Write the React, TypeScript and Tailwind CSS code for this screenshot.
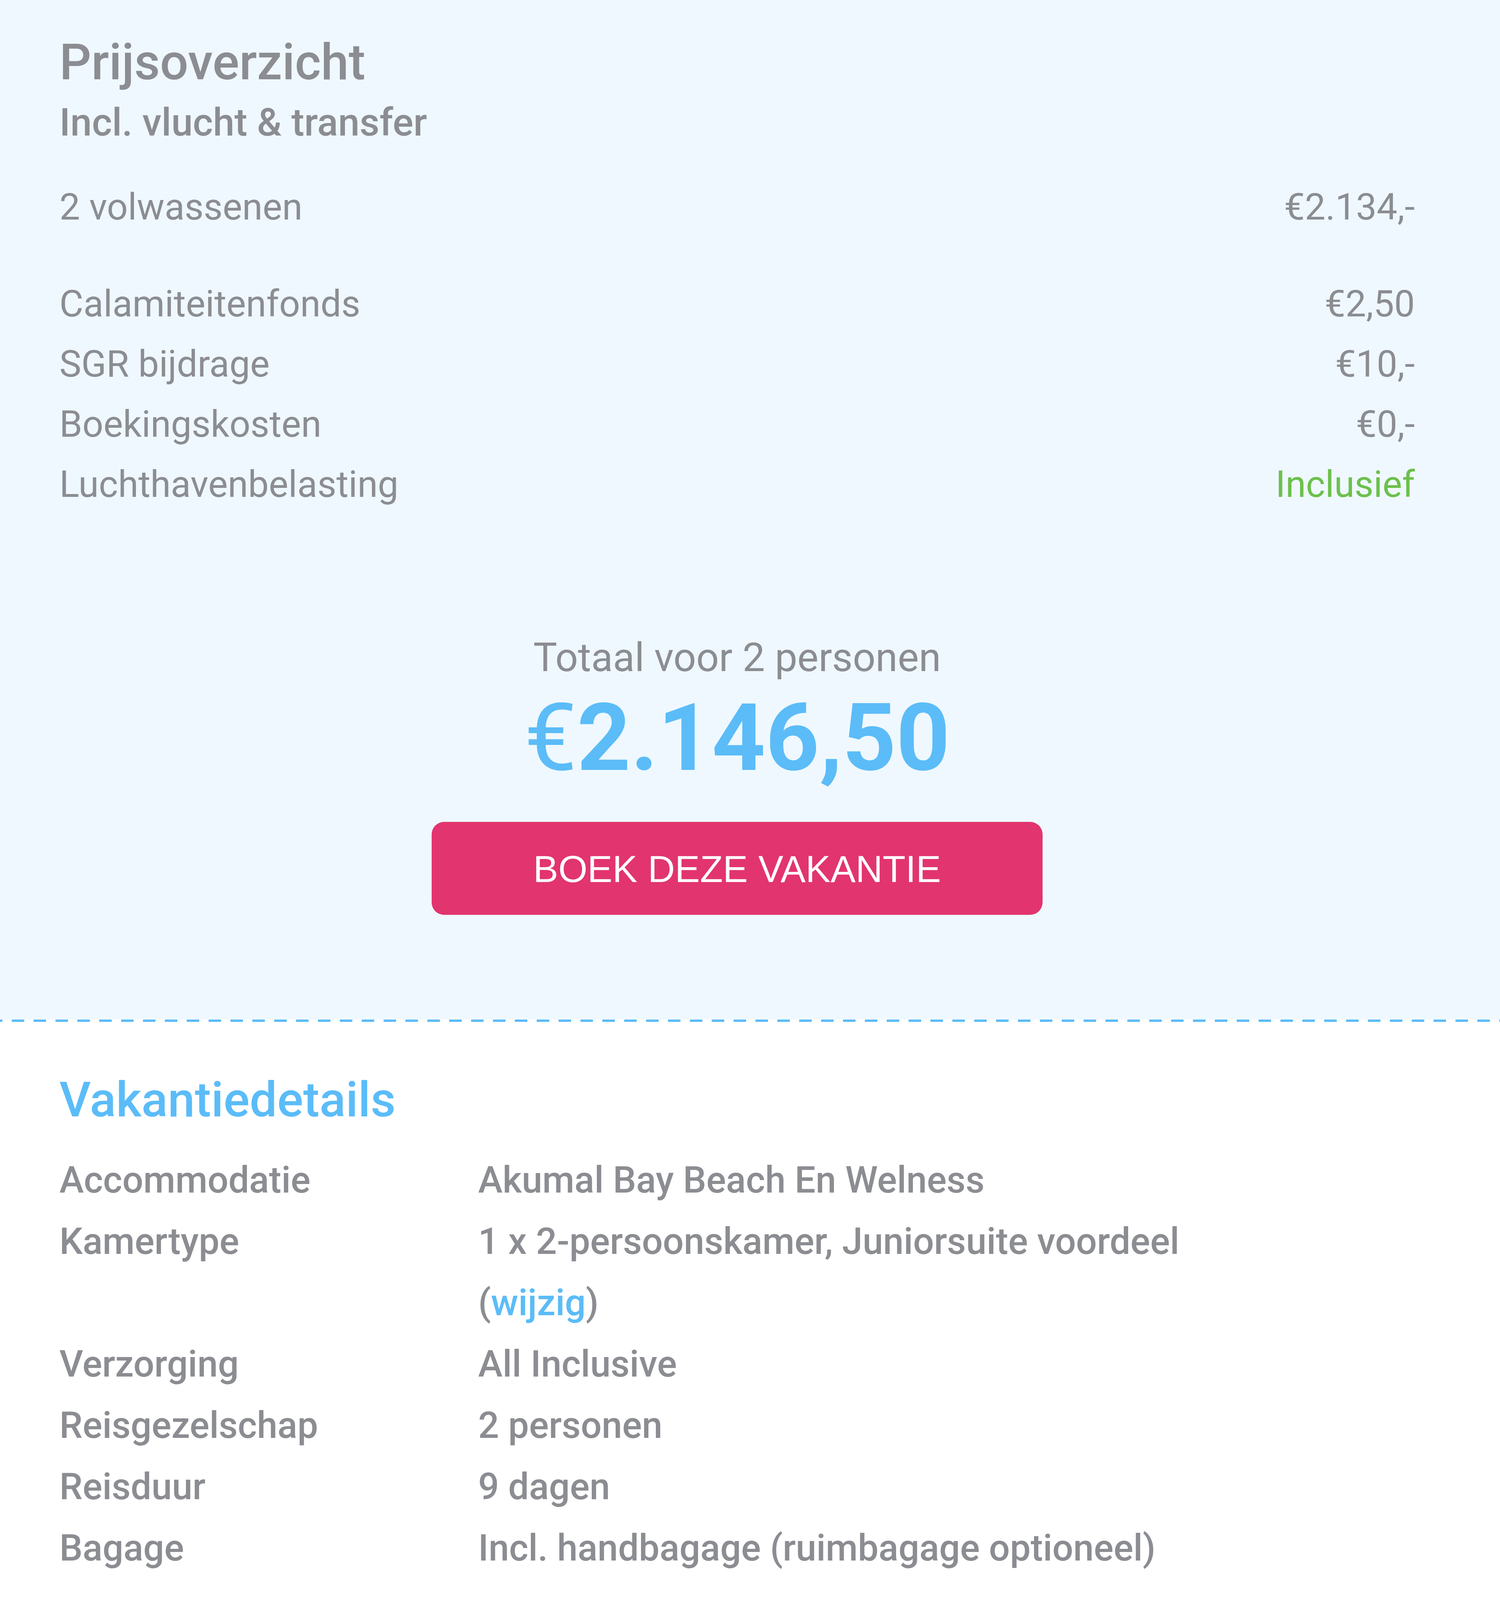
import React from "react";

interface PriceRowProps {
  label: string;
  value: string;
  included?: boolean;
}

function PriceRow({ label, value, included }: PriceRowProps) {
  return (
    <div className="flex items-center justify-between text-[94.4px] leading-[154px] whitespace-nowrap">
      <span>{label}</span>
      <span className={included ? "text-[#6cc04c]" : ""}>{value}</span>
    </div>
  );
}

interface DetailRowProps {
  label: string;
  children: React.ReactNode;
}

function DetailRow({ label, children }: DetailRowProps) {
  return (
    <div className="grid grid-cols-[1072px_minmax(0,1fr)] text-[94.4px] leading-[157px] font-medium">
      <span className="whitespace-nowrap">{label}</span>
      <span>{children}</span>
    </div>
  );
}

export default function App() {
  return (
    <div className="w-full bg-white font-[Roboto,sans-serif] text-[#8b8d92]">
      {/* Prijsoverzicht */}
      <section className="bg-[#eff8fe] pt-[79px] pb-[268px] pl-[152px] pr-[218px]">
        <h2 className="text-[128px] leading-[160px] font-medium">Prijsoverzicht</h2>
        <p className="mt-[12px] text-[99px] leading-[124px] font-medium">Incl. vlucht &amp; transfer</p>

        <div className="mt-[78px]">
          <PriceRow label="2 volwassenen" value="€2.134,-" />
        </div>

        <div className="mt-[94px]">
          <PriceRow label="Calamiteitenfonds" value="€2,50" />
          <PriceRow label="SGR bijdrage" value="€10,-" />
          <PriceRow label="Boekingskosten" value="€0,-" />
          <PriceRow label="Luchthavenbelasting" value="Inclusief" included />
        </div>

        <div className="mt-[302px] flex flex-col items-center">
          <p className="text-[102.4px] leading-[128px]">Totaal voor 2 personen</p>
          <p className="mt-[7px] text-[240px] leading-[270px] font-bold text-[#5bbcf8]">
            <span className="font-normal">€</span>2.146,50
          </p>
          <button
            type="button"
            className="mt-[80px] flex h-[238px] w-[1564px] items-center justify-center rounded-[32px] bg-[#e2346f] pt-[4px] font-['Liberation_Sans',Arial,sans-serif] text-[96px] text-white"
          >
            BOEK DEZE VAKANTIE
          </button>
        </div>
      </section>

      {/* dashed divider */}
      <div className="h-[6px] bg-white bg-[repeating-linear-gradient(90deg,#5bbcf8_0px,#5bbcf8_6px,transparent_6px,transparent_30px,#5bbcf8_30px,#5bbcf8_56px)]" />

      {/* Vakantiedetails */}
      <section className="pt-[124px] pb-[40px] pl-[152px] pr-[218px]">
        <h2 className="text-[124.8px] leading-[150px] font-medium text-[#5bbcf8]">Vakantiedetails</h2>
        <div className="mt-[52px]">
          <DetailRow label="Accommodatie">
            <span className="whitespace-nowrap">Akumal Bay Beach En Welness</span>
          </DetailRow>
          <DetailRow label="Kamertype">
            <span className="block whitespace-nowrap">1 x 2-persoonskamer, Juniorsuite voordeel</span>
            <span className="block whitespace-nowrap">
              (<span className="text-[#5bbcf8]">wijzig</span>)
            </span>
          </DetailRow>
          <DetailRow label="Verzorging">All Inclusive</DetailRow>
          <DetailRow label="Reisgezelschap">2 personen</DetailRow>
          <DetailRow label="Reisduur">9 dagen</DetailRow>
          <DetailRow label="Bagage">
            <span className="whitespace-nowrap">Incl. handbagage (ruimbagage optioneel)</span>
          </DetailRow>
        </div>
      </section>
    </div>
  );
}
